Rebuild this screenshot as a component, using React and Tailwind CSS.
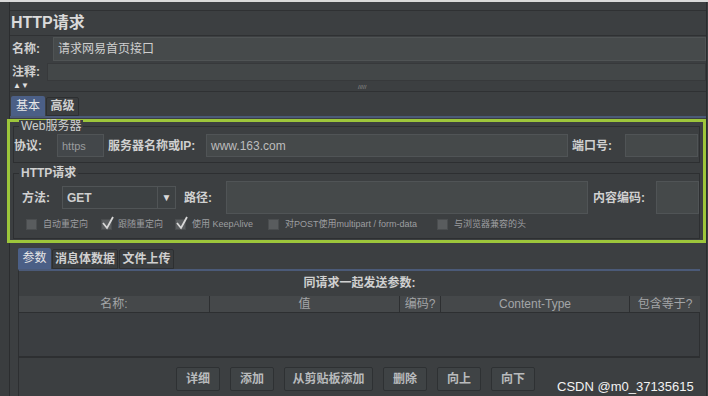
import React from "react";

const FONT = { fontFamily: '"Liberation Sans", "Noto Sans CJK SC", sans-serif' };

const Check = ({ checked }) => (
    <span className="relative w-[11px] h-[11px] bg-[#595c5e] border border-[#4a4d4f] inline-block shrink-0">
        {checked && (
            <svg className="absolute -left-[1px] -top-[4px]" width="14" height="14" viewBox="0 0 14 14">
                <path d="M2 7 L6 12 L12 1" stroke="#d8d8d8" strokeWidth="1.8" fill="none" />
            </svg>
        )}
    </span>
);

const Btn = ({ children, w }) => (
    <div className={`h-[24px] ${w} flex items-center justify-center rounded-[2px] bg-[#3f4345] border border-[#2e3133] text-[12px] font-bold text-[#b9bbbd]`}>
        {children}
    </div>
);

export default function App() {
    return (
        <div style={FONT} className="w-[708px] h-[396px] overflow-hidden bg-[#3c3f41] border-t-2 border-[#d9d9d9] flex text-[#c8c8c8]">
            <div className="w-[10px] shrink-0 bg-[#3a3d3f] border-r border-[#2b2d2f]" />
            <div className="flex-1 flex flex-col pt-[8px]">
                {/* Header */}
                <div className="border-t border-[#2f3133] border-b border-b-[#2f3133] h-[26px] flex items-center pl-[1px]">
                    <span className="text-[16px] font-bold text-[#dadada] leading-none">HTTP请求</span>
                </div>
                <div className="flex items-center h-[24px] mt-[1px] pl-[2px]">
                    <span className="w-[41px] text-[12px] font-bold text-[#d0d0d0]">名称:</span>
                    <div className="flex-1 h-[24px] bg-[#464a4b] border border-[#505455] flex items-center px-[4px] text-[12px] text-[#cfcfcf]">请求网易首页接口</div>
                </div>
                <div className="flex items-center h-[19px] mt-[2px] pl-[2px]">
                    <span className="w-[35px] text-[12px] font-bold text-[#d0d0d0]">注释:</span>
                    <div className="flex-1 h-[18px] bg-[#434748] border border-[#37393b]" />
                </div>
                <div className="relative h-[11px] border-b border-[#2f3133] flex items-center pl-[3px]">
                    <span className="text-[8px] leading-none text-[#e0e0e0]">▲▼</span>
                    <span className="absolute left-[348px] top-[3px] text-[6px] leading-none text-[#9a9a9a]">/////</span>
                </div>
                {/* Tabs */}
                <div className="flex items-end mt-[5px] h-[21px] pl-[1px] border-b-2 border-[#4b5a78]">
                    <div className="h-[20px] w-[34px] bg-[#4b5f86] flex items-center justify-center text-[12px] text-[#e6e6e6] rounded-t-[2px]">基本</div>
                    <div className="h-[19px] w-[33px] ml-[1px] bg-[#3a3d3f] border border-[#2d2f31] flex items-center justify-center text-[12px] font-bold text-[#d0d0d0] rounded-t-[2px]">高级</div>
                </div>
                {/* Highlighted box */}
                <div className="ml-[-3px] mt-[1px] h-[126px] border-[3px] border-[#9dc63b] flex flex-col">
                    <div className="relative mx-[3px] mt-[4px] h-[37px] border border-[#2d2f31]">
                        <span className="absolute -top-[7px] left-[5px] px-[2px] bg-[#3c3f41] text-[12px] leading-none text-[#cfcfcf]">Web服务器</span>
                        <div className="flex items-center h-full pt-[3px]">
                            <span className="w-[43px] text-[12px] font-bold text-[#d0d0d0]">协议:</span>
                            <div className="w-[47px] h-[23px] bg-[#43474a] border border-[#505456] flex items-center px-[4px] text-[11px] text-[#9a9c9e]">https</div>
                            <span className="ml-[4px] w-[98px] text-[12px] font-bold text-[#d0d0d0]">服务器名称或IP:</span>
                            <div className="w-[362px] h-[23px] bg-[#45494a] border border-[#505456] flex items-center px-[4px] text-[12px] text-[#bdbdbd]">www.163.com</div>
                            <span className="ml-[4px] w-[53px] text-[12px] font-bold text-[#d0d0d0]">端口号:</span>
                            <div className="w-[73px] h-[23px] bg-[#45494a] border border-[#505456]" />
                        </div>
                    </div>
                    <div className="relative mx-[3px] mt-[10px] h-[66px] border border-[#2d2f31]">
                        <span className="absolute -top-[7px] left-[5px] px-[2px] bg-[#3c3f41] text-[12px] leading-none font-bold text-[#d0d0d0]">HTTP请求</span>
                        <div className="flex items-center h-[34px] mt-[7px] pl-[8px]">
                            <span className="w-[40px] text-[12px] font-bold text-[#d0d0d0]">方法:</span>
                            <div className="w-[114px] h-[23px] bg-[#3d4143] border border-[#505456] flex items-center">
                                <span className="flex-1 px-[4px] text-[12px] font-bold text-[#cfcfcf]">GET</span>
                                <span className="w-[18px] h-full border-l border-[#505456] flex items-center justify-center text-[10px] text-[#d8d8d8]">▼</span>
                            </div>
                            <span className="ml-[8px] w-[42px] text-[12px] font-bold text-[#d0d0d0]">路径:</span>
                            <div className="w-[362px] h-[33px] bg-[#45494a] border border-[#505456]" />
                            <span className="ml-[5px] w-[63px] text-[12px] font-bold text-[#d0d0d0]">内容编码:</span>
                            <div className="w-[43px] h-[33px] bg-[#45494a] border border-[#505456]" />
                        </div>
                        <div className="flex items-center h-[18px] mt-[1px] pl-[12px] text-[9px] text-[#9c9ea0]">
                            <Check /><span className="ml-[6px] w-[58px]">自动重定向</span>
                            <Check checked /><span className="ml-[6px] w-[57px]">跟随重定向</span>
                            <Check checked /><span className="ml-[6px] w-[76px]">使用 KeepAlive</span>
                            <Check /><span className="ml-[6px] w-[152px]">对POST使用multipart / form-data</span>
                            <Check /><span className="ml-[6px]">与浏览器兼容的头</span>
                        </div>
                    </div>
                </div>
                {/* Lower tabs */}
                <div className="flex items-end mt-[5px] h-[21px] ml-[8px] mr-[6px]">
                    <div className="h-[21px] w-[33px] bg-[#4b5f86] flex items-center justify-center text-[12px] text-[#e6e6e6] rounded-t-[2px]">参数</div>
                    <div className="h-[20px] w-[66px] ml-[1px] bg-[#3a3d3f] border border-[#2d2f31] flex items-center justify-center text-[12px] font-bold text-[#d0d0d0] rounded-t-[2px]">消息体数据</div>
                    <div className="h-[20px] w-[55px] ml-[1px] bg-[#3a3d3f] border border-[#2d2f31] flex items-center justify-center text-[12px] font-bold text-[#d0d0d0] rounded-t-[2px]">文件上传</div>
                </div>
                <div className="flex-1 ml-[8px] mr-[6px] border-t-2 border-[#4b5a78] border-l border-l-[#2d2f31] flex flex-col">
                    <div className="h-[25px] flex items-center justify-center text-[12px] font-bold text-[#d0d0d0]">同请求一起发送参数:</div>
                    <div className="flex h-[17px] bg-[#45484a] border-b border-[#2d2f31] text-[12px] text-[#a3a5a7]">
                        <div className="w-[191px] border-r border-[#2d2f31] flex items-center justify-center">名称:</div>
                        <div className="w-[190px] border-r border-[#2d2f31] flex items-center justify-center">值</div>
                        <div className="w-[41px] border-r border-[#2d2f31] flex items-center justify-center">编码?</div>
                        <div className="w-[189px] border-r border-[#2d2f31] flex items-center justify-center">Content-Type</div>
                        <div className="flex-1 flex items-center justify-center">包含等于?</div>
                    </div>
                    <div className="h-[45px] border-b-2 border-[#2d2f31] border-r border-r-[#2d2f31] bg-[#3b3e41]" />
                    <div className="relative flex items-center gap-[10px] pl-[157px] pt-[5px]">
                        <Btn w="w-[44px]">详细</Btn>
                        <Btn w="w-[44px]">添加</Btn>
                        <Btn w="w-[89px]">从剪贴板添加</Btn>
                        <Btn w="w-[44px]">删除</Btn>
                        <Btn w="w-[44px]">向上</Btn>
                        <Btn w="w-[44px]">向下</Btn>
                        <span className="ml-[12px] mt-[14px] text-[13px] text-[#f2f2f2] whitespace-nowrap">CSDN @m0_37135615</span>
                    </div>
                </div>
            </div>
            <div className="w-[6px] shrink-0 border-l border-[#2b2d2f] bg-[#3c3f41]" />
        </div>
    );
}
